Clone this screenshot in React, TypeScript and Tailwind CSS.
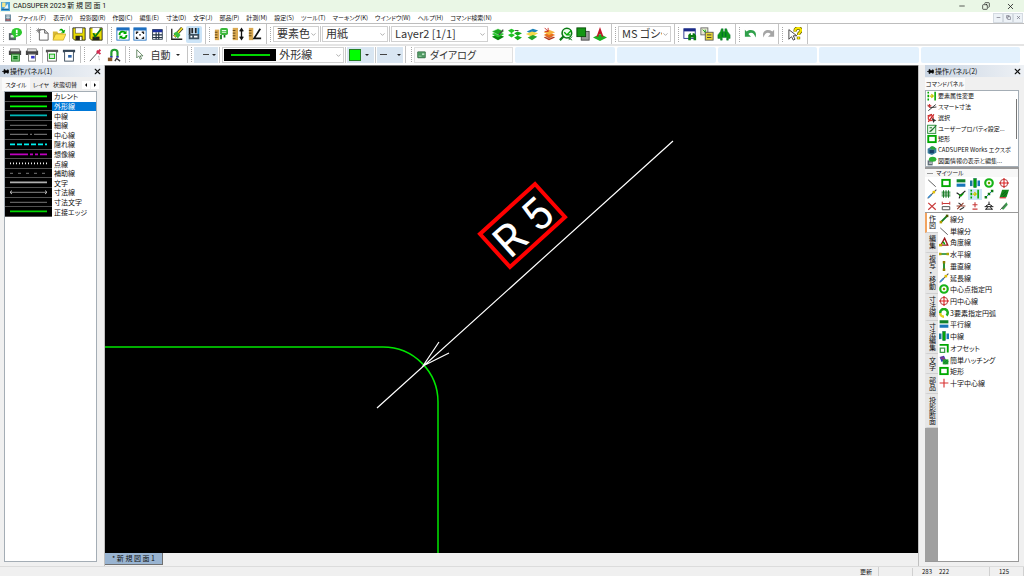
import { useState } from "react";
import type { ReactNode } from "react";
import { ChevronDown, Minus, Copy, X, Pin } from "lucide-react";

const G = "#00a800";
const DG = "#0a7a14";

// All glyphs are drawn on a 16x16 grid
const icons: Record<string, ReactNode> = {
  app: (
    <>
      <rect x="0" y="0" width="16" height="16" fill="#4aa3d8" />
      <rect x="2" y="1" width="6" height="8" fill="#f4e58a" />
      <path d="M5 12L12 3l1 9z" fill="#e8f4fb" />
      <path d="M1 13h13" stroke="#17608f" strokeWidth="2" />
    </>
  ),
  doc: (
    <>
      <rect x="2" y="1" width="12" height="14" fill="#6d8ea0" />
      <path d="M4 4h8M4 7h8M8 3v10" stroke="#fff" strokeWidth="1" />
      <path d="M3 12h10" stroke="#b33" strokeWidth="2" />
    </>
  ),
  notice: (
    <>
      <rect x="1" y="7" width="8" height="8" fill="#555f66" />
      <rect x="3" y="9" width="4" height="3" fill="#e8e8e8" />
      <ellipse cx="10" cy="6" rx="6" ry="5" fill="#2cc82c" />
      <path d="M7 9l-1 5 5-4z" fill="#2cc82c" />
      <path d="M10 3v4M10 8v1.500" stroke="#fff" strokeWidth="2" />
    </>
  ),
  newFile: (
    <>
      <path d="M5 3h6l4 4v8H5z" fill="#fff" stroke="#555" />
      <path d="M11 3v4h4" fill="#ddd" stroke="#555" />
      <path d="M1 4h6M4 1v6M2 2l4 4M6 2L2 6" stroke="#777" strokeWidth=".8" />
    </>
  ),
  open: (
    <>
      <path d="M1 5h5l1 2h6v7H1z" fill="#d9b936" />
      <path d="M4 8h12l-3 7H1z" fill="#ffe14a" stroke="#a98a12" strokeWidth=".6" />
      <path d="M8 4c2-3 4-2 5 0l2-1-1 4-4-1 2-1c-1-1-2-1-4-1z" fill={G} />
    </>
  ),
  save: (
    <>
      <path d="M1 1h14v14H3l-2-2z" fill="#e8dc00" stroke="#222" />
      <rect x="4" y="1" width="8" height="6" fill="#fff" stroke="#444" strokeWidth=".6" />
      <rect x="4" y="10" width="8" height="5" fill="#222" />
      <rect x="9" y="11" width="2" height="4" fill="#fff" />
    </>
  ),
  saveAs: (
    <>
      <path d="M1 1h14v14H3l-2-2z" fill="#e8dc00" stroke="#222" />
      <rect x="4" y="1" width="8" height="6" fill="#fff" />
      <rect x="4" y="11" width="8" height="4" fill="#222" />
      <path d="M5 7l2 4 7-9" fill="none" stroke={DG} strokeWidth="2" />
    </>
  ),
  refresh: (
    <>
      <rect x="1" y="1" width="14" height="14" fill="#fff" stroke="#1d6fc0" />
      <rect x="1" y="1" width="14" height="3" fill="#1d6fc0" />
      <path d="M4 9c0-4 5-5 7-2M12 9c0 4-5 5-7 2" fill="none" stroke={G} strokeWidth="2" />
      <path d="M12 4v4H8zM4 14v-4h4z" fill={G} />
    </>
  ),
  fit: (
    <>
      <rect x="1" y="1" width="14" height="14" fill="#fff" stroke="#1d6fc0" />
      <rect x="1" y="1" width="14" height="3" fill="#1d6fc0" />
      <path d="M4 8V6h2M12 8V6h-2M4 11v2h2M12 11v2h-2M7 9h2" fill="none" stroke="#222" strokeWidth="1.500" />
    </>
  ),
  calc: (
    <>
      <rect x="3" y="3" width="11" height="11" fill="#fff" stroke="#234" />
      <rect x="3" y="3" width="11" height="3" fill="#1a2fa0" />
      <path d="M3 9h11M3 12h11M7 6v8M10 6v8" stroke="#234" strokeWidth="1.300" />
    </>
  ),
  brush: (
    <>
      <path d="M2 2v12h12" fill="none" stroke="#222" strokeWidth="1.500" />
      <path d="M5 11L14 1" stroke="#222" strokeWidth="3.500" />
      <path d="M5 11L14 1" stroke="#f2de28" strokeWidth="2.200" />
      <path d="M4 7l5 6 3-4-4-4z" fill="#3bbf3b" />
    </>
  ),
  snap: (
    <>
      <path d="M3 1v8M6 1v6M10 1v6" stroke="#222" strokeWidth="2" />
      <path d="M13 1v7" stroke="#2c8fd0" strokeWidth="2" />
      <rect x="2" y="8" width="12" height="6" fill="#3c5060" />
      <path d="M4 11h2M8 11h4" stroke="#fff" strokeWidth="2" />
    </>
  ),
  rulerNote: (
    <>
      <rect x="1" y="3" width="5" height="12" fill="#d9a850" />
      <path d="M1 6h3M1 9h3M1 12h3" stroke="#553a10" />
      <rect x="7" y="1" width="9" height="8" rx="2" fill="#3ab83a" />
      <path d="M9 4h5M9 6h5" stroke="#fff" />
      <path d="M8 9v5M12 9v3" stroke={DG} strokeWidth="2" />
    </>
  ),
  rulerV: (
    <>
      <rect x="2" y="1" width="6" height="14" fill="#d9a850" />
      <path d="M2 4h3M2 7h3M2 10h3M2 13h3" stroke="#553a10" />
      <path d="M12 3v10M10 5l2-3 2 3M10 11l2 3 2-3" fill="none" stroke="#111" strokeWidth="1.500" />
    </>
  ),
  rulerAngle: (
    <>
      <rect x="1" y="1" width="5" height="14" fill="#d9a850" />
      <path d="M1 4h3M1 7h3M1 10h3" stroke="#553a10" />
      <path d="M14 2L7 13h8" fill="none" stroke="#111" strokeWidth="2" />
    </>
  ),
  layer: (
    <>
      <path d="M1 11l7-3 7 3-7 4z" fill="#07880c" />
      <path d="M1 8l7-3 7 3-7 4z" fill="#27c42c" />
      <path d="M1 5l7-3 7 3-7 4z" fill="#1aa81f" stroke="#d6ffd6" strokeWidth=".5" />
      <path d="M9 9l5-6" stroke="#444" strokeWidth="1.500" />
    </>
  ),
  layerMove: (
    <>
      <path d="M0 4l4-2 4 2-4 3zM0 9l4-2 4 2-4 3z" fill="#22c326" />
      <path d="M7 7l4-2 5 2-5 3zM7 12l4-2 5 2-5 3z" fill="#13ac19" />
      <path d="M8 4h4" fill="none" stroke="#333" />
    </>
  ),
  layerSwap: (
    <>
      <path d="M2 5l7-3 6 2-7 4z" fill="#1d83b9" />
      <path d="M1 8l7-3 7 2-7 4z" fill="#f2d84a" />
      <path d="M3 12l6-3 5 2-6 4z" fill="#25a52a" />
    </>
  ),
  layerStack: (
    <>
      <path d="M2 12l6-3 7 3-7 3z" fill="#b0341c" />
      <path d="M2 9l6-3 7 3-7 3z" fill="#e86f1d" />
      <path d="M2 6l6-3 7 3-7 3z" fill="#f6b33f" />
      <path d="M3 1l4 4M3 5h4V1" stroke="#c8251c" fill="none" />
      <path d="M2 10l6 3 7-3" stroke="#ffe0b0" fill="none" strokeWidth=".7" />
    </>
  ),
  search: (
    <>
      <circle cx="9" cy="7" r="5.500" fill="#e9fbe9" stroke={DG} strokeWidth="1.800" />
      <path d="M5 11l-4 4" stroke={DG} strokeWidth="2.500" />
      <path d="M6 6l3 3 5-5M9 9h4" fill="none" stroke={G} strokeWidth="1.600" />
      <path d="M10 12l5 3M15 11l-4 4" stroke={DG} />
    </>
  ),
  squares: (
    <>
      <rect x="6" y="5" width="9" height="10" fill="#9a9a9a" stroke="#444" />
      <rect x="1" y="1" width="10" height="10" fill="#149614" stroke="#084808" />
    </>
  ),
  letterA: (
    <>
      <path d="M0 12l8-4 8 4-8 4z" fill="#1cb022" />
      <path d="M8 0l4 11h-2l-1-3H7l-1 3H4z" fill="#c01828" />
    </>
  ),
  findWin: (
    <>
      <rect x="1" y="2" width="13" height="11" fill="#fff" stroke="#1b2a88" />
      <rect x="1" y="2" width="13" height="3" fill="#1b2a88" />
      <path d="M6 15V9l2-2h1v2h2V7h2l2 3v5h-3v-3h-3v3z" fill={DG} />
    </>
  ),
  findDoc: (
    <>
      <rect x="1" y="1" width="8" height="8" fill="#e6e6d0" stroke="#666" />
      <path d="M3 3l3 3M6 3v4" stroke={G} />
      <rect x="6" y="6" width="9" height="9" fill="#e9d537" stroke="#555" />
      <path d="M8 9h5M8 12h5" stroke="#333" />
    </>
  ),
  binocular: (
    <>
      <path d="M1 9l3-4 1-3h2v3h2V2h2l1 3 3 4v4h-2v2h-2v-3H6v3H4v-2H1z" fill="#119a1a" stroke="#063" strokeWidth=".5" />
      <path d="M6 6v5M10 6v5" stroke="#063" strokeWidth="1.200" />
    </>
  ),
  undo: <path d="M1 3v8h7L5 8c3-3 7-1 8 4 3-7-4-11-10-7z" fill="#2fa04a" />,
  redo: <path d="M15 3v8H8l3-3C8 5 4 7 3 12 0 5 7 1 13 5z" fill="#a5a5a5" />,
  help: (
    <>
      <path d="M1 3v11l3-3 2 4 2-1-2-4h4z" fill="#fff" stroke="#333" />
      <path d="M8 5c0-5 7-5 7-1 0 2-3 2-3 5M12 11v3" fill="none" stroke="#555000" strokeWidth="3.800" />
      <path d="M8 5c0-5 7-5 7-1 0 2-3 2-3 5M12 11v3" fill="none" stroke="#f4e400" strokeWidth="2.400" />
    </>
  ),
  printG: (
    <>
      <path d="M1 3h14v5H1z" fill="#444" />
      <rect x="3" y="1" width="10" height="3" fill="#ddd" stroke="#555" strokeWidth=".6" />
      <rect x="4" y="7" width="9" height="8" fill="#8fd08f" stroke="#267a26" />
      <path d="M6 10h5M6 12h5" stroke={DG} strokeWidth="1.500" />
    </>
  ),
  printB: (
    <>
      <path d="M1 3h14v5H1z" fill="#444" />
      <rect x="3" y="1" width="10" height="3" fill="#ddd" stroke="#555" strokeWidth=".6" />
      <rect x="4" y="7" width="8" height="8" fill="#fff" stroke="#777" />
      <rect x="7" y="9" width="4" height="3" fill="#3333c8" />
    </>
  ),
  plotG: (
    <>
      <path d="M1 2h14v3H1z" fill="#555" />
      <rect x="3" y="4" width="10" height="11" fill="#fff" stroke="#555" />
      <rect x="5" y="7" width="6" height="5" fill="#cfeccf" stroke={G} />
    </>
  ),
  plotB: (
    <>
      <path d="M1 2h14v3H1z" fill="#345" />
      <rect x="3" y="4" width="10" height="11" fill="#fff" stroke="#345" />
      <rect x="7" y="8" width="4" height="3" fill="#2a62a8" />
    </>
  ),
  pick: (
    <>
      <path d="M1 15L10 5" stroke="#444" />
      <path d="M9 6l4-4M9 3l4 4" stroke="#d22a50" strokeWidth="2.200" />
      <path d="M11 9l1 6" stroke="#999" strokeDasharray="2 1" />
    </>
  ),
  magnet: (
    <>
      <path d="M5 10V5c0-4 7-4 7 0v5" fill="none" stroke="#229c30" strokeWidth="2.500" />
      <path d="M5 9v2M12 9v2" stroke="#2233aa" strokeWidth="2.500" />
      <rect x="1" y="11" width="5" height="4" fill="#8a5a2b" />
      <path d="M9 15l2-3 4 3" stroke="#333" fill="none" strokeWidth="1.500" />
    </>
  ),
  cursor: <path d="M4 1v12l3-3 2 5 2-1-2-4h4z" fill="#fff" stroke="#2b5c2b" />,
  dialog: (
    <>
      <rect x="1" y="3" width="14" height="11" rx="1" fill="#4f9a63" stroke="#2c5e3a" />
      <path d="M3 11h5" stroke="#d8f0d8" />
      <path d="M9 6h4v3H9z" fill="#bfe6c8" />
    </>
  ),
  attr: (
    <>
      <path d="M2 1v3M2 6v4M2 12v3M13 1v14" stroke={G} strokeWidth="2.500" />
      <path d="M4 8h5M7 5l3 3-3 3" fill="none" stroke="#c8c800" strokeWidth="2" />
    </>
  ),
  smart: (
    <>
      <path d="M2 14L14 4M1 5l5 4 9-1" fill="none" stroke="#333" strokeWidth="1.500" />
      <path d="M4 3v6M1 6h6" stroke="#c33" strokeWidth="2" />
    </>
  ),
  select: (
    <>
      <path d="M2 14L11 2M1 5l7-3" stroke="#c02020" strokeWidth="2" />
      <circle cx="6" cy="8" r="4" fill="none" stroke="#d83a3a" strokeWidth="2" />
      <path d="M8 8l7 4-3 1-2 3z" fill="#333" />
    </>
  ),
  prop: (
    <>
      <rect x="1" y="2" width="13" height="13" fill="#e9f7e9" stroke="#2c8f3a" strokeWidth="1.500" />
      <path d="M4 12l3-1 8-9M4 6h4" stroke="#1b7d29" strokeWidth="1.800" />
    </>
  ),
  rect: <rect x="2" y="3" width="12" height="10" fill="#fff" stroke={G} strokeWidth="3" />,
  works: (
    <>
      <path d="M1 6l7-4 7 3v7l-7 4-7-3z" fill="#3d7f9f" />
      <path d="M5 3c5-3 9 1 9 4H6z" fill="#27a33a" />
      <rect x="4" y="8" width="7" height="5" fill="#173f66" />
    </>
  ),
  info: (
    <>
      <rect x="1" y="7" width="8" height="8" fill="#5b6b74" />
      <ellipse cx="9" cy="5" rx="6" ry="4" fill="#2cb234" />
      <path d="M3 10h5M3 12h5" stroke="#eee" />
    </>
  ),
  lineThin: <path d="M2 3l12 11" stroke="#555" strokeWidth="1.500" />,
  parallel: (
    <>
      <rect x="1" y="2" width="14" height="5" fill="#11832a" />
      <rect x="1" y="9" width="14" height="5" fill="#1876b8" />
    </>
  ),
  center: (
    <>
      <rect x="0" y="4" width="4" height="9" fill="#18769a" />
      <rect x="6" y="1" width="4" height="14" fill={G} stroke="#064" />
      <rect x="12" y="4" width="4" height="9" fill="#1876b8" />
    </>
  ),
  circle: (
    <>
      <circle cx="8" cy="8" r="6" fill="#fff" stroke="#18b418" strokeWidth="3.500" />
      <circle cx="8" cy="8" r="2" fill="#7a9b00" />
    </>
  ),
  cross: (
    <>
      <circle cx="8" cy="8" r="6" fill="none" stroke="#a33" strokeWidth="1.500" />
      <path d="M8 0v16M0 8h16" stroke="#d22" strokeWidth="1.800" />
    </>
  ),
  extend: (
    <>
      <path d="M1 15L15 1" stroke="#555" strokeWidth="1.800" />
      <path d="M2 14l5-5" stroke="#3a8cd0" strokeWidth="2.500" />
      <rect x="9" y="3" width="4" height="4" fill="#e5c200" />
    </>
  ),
  segment: (
    <>
      <path d="M3 13L13 3" stroke="#147a1f" strokeWidth="3" />
      <rect x="1" y="11" width="4" height="4" fill="#b09b00" />
      <rect x="11" y="1" width="4" height="4" fill="#4a5a00" />
    </>
  ),
  grid: <path d="M4 2v12M8 2v12M12 2v12M1 5h14M1 8h14M1 11h14" stroke="#1c7d28" strokeWidth="1.600" />,
  branch: (
    <>
      <path d="M1 6l6 4 8-7M7 10l-2 5" fill="none" stroke="#222" strokeWidth="2" />
      <path d="M5 9l3 2 4-4" stroke={G} fill="none" strokeWidth="2" />
    </>
  ),
  dots: (
    <>
      <path d="M2 14L14 2" stroke="#1876b8" strokeWidth="1.500" />
      <path d="M1 11h4v4H1zM6 6h4v4H6zM11 1h4v4h-4z" fill={DG} />
    </>
  ),
  hatchBox: (
    <>
      <path d="M5 1h11l-4 12H1z" fill="#15861f" />
      <path d="M4 10l7-6M6 13l7-7" stroke="#0a5c10" strokeWidth="1.300" />
      <path d="M1 14h10" stroke="#c83030" strokeWidth="2" />
    </>
  ),
  del: <path d="M2 3l12 11M14 3L2 14" stroke="#c83a3a" strokeWidth="2" />,
  dim: (
    <>
      <path d="M2 1v5M14 1v5M2 4h12" stroke="#c83a3a" strokeWidth="1.600" />
      <path d="M2 9h12v5H2z" fill="none" stroke="#555" strokeWidth="1.600" />
    </>
  ),
  trim: (
    <>
      <path d="M2 13L12 3M1 8h14" stroke="#8e3a2a" strokeWidth="1.800" />
      <path d="M6 14l7-4M4 3l4 3" stroke="#333" strokeWidth="1.800" />
    </>
  ),
  plusMinus: <path d="M8 2v8M4 6h8M4 13h8" stroke="#c83a3a" strokeWidth="1.800" />,
  house: <path d="M8 1v4M3 8l5-3 5 3M1 9h14M3 14l3-5M13 14l-3-5M2 13h12" fill="none" stroke="#222" strokeWidth="1.600" />,
  pen: (
    <>
      <path d="M3 12L12 2l2 4-7 8z" fill="#3b9a4c" />
      <path d="M2 14l8-8" stroke="#555" strokeWidth="1.500" />
    </>
  ),
  angle: (
    <>
      <path d="M14 13H3L9 2z" fill="none" stroke="#9d1c1c" strokeWidth="2.200" />
      <rect x="0" y="11" width="5" height="4" fill="#c2a900" />
      <path d="M9 12a5 5 0 00-3-4" stroke={G} strokeWidth="2.500" fill="none" />
    </>
  ),
  horiz: (
    <>
      <path d="M2 8h12" stroke="#1c8a28" strokeWidth="2.500" />
      <path d="M0 6h4v4H0zM12 6h4v4h-4z" fill="#b3a400" />
    </>
  ),
  vert: (
    <>
      <path d="M8 2v12" stroke="#1c8a28" strokeWidth="3" />
      <path d="M6 0h4v4H6zM6 12h4v4H6z" fill="#8a8000" />
    </>
  ),
  arc3: (
    <>
      <path d="M8 14A6 6 0 012 8" fill="none" stroke="#e0d020" strokeWidth="4" />
      <path d="M2 8a6 6 0 1110 4" fill="none" stroke="#1cae1c" strokeWidth="4" />
    </>
  ),
  offset: (
    <>
      <path d="M1 3h13v12" fill="none" stroke={G} strokeWidth="3" />
      <path d="M2 8h7v7H2z" fill="none" stroke="#3a9a48" strokeWidth="2" />
    </>
  ),
  hatch: (
    <>
      <path d="M1 3l7-2 3 7-7 3z" fill="#2a3fc0" />
      <path d="M2 4l8 5M5 2l5 6" stroke="#d03060" strokeWidth="1.500" />
      <path d="M6 7h9v8H6z" fill="#21a02c" />
      <path d="M8 13l5-5M10 15l5-5" stroke="#063" />
    </>
  ),
  plus: <path d="M8 1v14M1 8h14" stroke="#d83030" strokeWidth="1.800" />,
};

const Icon = ({ name, className = "size-[14px]" }: { name: string; className?: string }) => (
  <svg viewBox="0 0 16 16" className={`${className} shrink-0`} aria-hidden="true">
    {icons[name]}
  </svg>
);

const Tool = ({ name, active }: { name: string; active?: boolean }) => (
  <button
    aria-label={name}
    className={`flex h-[17px] w-4 shrink-0 items-center justify-center rounded-xs ${active ? "bg-[#cce4f7]" : ""}`}
  >
    <Icon name={name} />
  </button>
);

const Tools = ({ names, active }: { names: string[]; active?: string }) => (
  <div className="flex flex-1 items-center justify-around">
    {names.map((n) => (
      <Tool key={n} name={n} active={n === active} />
    ))}
  </div>
);

const Sep = () => <div className="h-4 w-px shrink-0 bg-[#c8c8c8]" />;

const Group = ({ className, children }: { className: string; children: ReactNode }) => (
  <div className={`flex h-full shrink-0 items-center gap-px border-r border-[#c4c4c4] pr-[2px] ${className}`}>
    <div className="ml-[3px] mr-px h-[15px] shrink-0 border-l border-dotted border-[#a8a8a8]" />
    {children}
  </div>
);

interface ComboProps {
  label: string;
  value: string;
  className: string;
  children?: ReactNode;
}

const Combo = ({ label, value, className, children }: ComboProps) => (
  <div className={`relative flex h-4 shrink-0 items-center border border-[#d0d0d0] bg-white ${className}`}>
    {children}
    <select aria-label={label} className="h-full w-full min-w-0 appearance-none bg-transparent pb-px pl-[3px] pr-2 text-[11px] leading-[13px] text-[#333]">
      <option>{value}</option>
    </select>
    <ChevronDown className="pointer-events-none absolute right-px top-1 size-[7px] text-[#777]" />
  </div>
);

const Caret = () => <span className="border-x-2 border-t-2 border-x-transparent border-t-[#222]" />;

const menus = [
  "ファイル(F)", "表示(V)", "投影図(R)", "作図(C)", "編集(E)", "寸法(D)", "文字(J)", "部品(P)",
  "計測(M)", "設定(S)", "ツール(T)", "マーキング(K)", "ウインドウ(W)", "ヘルプ(H)", "コマンド検索(N)",
];

const styles = [
  { name: "カレント", color: "#00ff00", width: 2 },
  { name: "外形線", color: "#00ff00", width: 2 },
  { name: "中線", color: "#00b8b8", width: 2 },
  { name: "細線", color: "#808080", width: 1 },
  { name: "中心線", color: "#909090", width: 1, dash: "18 2 2 2" },
  { name: "隠れ線", color: "#00f0f0", width: 2, dash: "5 2" },
  { name: "想像線", color: "#c000c0", width: 2, dash: "18 2 3 2 3 2" },
  { name: "点線", color: "#f0f0f0", width: 2, dash: "1 2" },
  { name: "補助線", color: "#808080", width: 1, dash: "3 5" },
  { name: "文字", color: "#b0b0b0", width: 2 },
  { name: "寸法線", color: "#909090", width: 1, arrow: true },
  { name: "寸法文字", color: "#808080", width: 1 },
  { name: "正接エッジ", color: "#00d800", width: 2 },
];

const commands = [
  ["attr", "要素属性変更"],
  ["smart", "スマート寸法"],
  ["select", "選択"],
  ["prop", "ユーザープロパティ設定..."],
  ["rect", "矩形"],
  ["works", "CADSUPER Works エクスポ"],
  ["info", "図面情報の表示と編集..."],
];

const myTools = [
  "lineThin", "rect", "parallel", "center", "circle", "cross",
  "extend", "grid", "branch", "attr", "dots", "hatchBox",
  "del", "dim", "trim", "plusMinus", "house", "pen",
];

const sideTabs = ["作図", "編集", "複写・移動", "寸法線", "寸法編集", "文字", "部品", "投影断面"];

const drawTools = [
  ["segment", "線分"],
  ["lineThin", "単線分"],
  ["angle", "角度線"],
  ["horiz", "水平線"],
  ["vert", "垂直線"],
  ["extend", "延長線"],
  ["circle", "中心点指定円"],
  ["cross", "円中心線"],
  ["arc3", "3要素指定円弧"],
  ["parallel", "平行線"],
  ["center", "中線"],
  ["offset", "オフセット"],
  ["hatch", "簡単ハッチング"],
  ["rect", "矩形"],
  ["plus", "十字中心線"],
];

const TitleBar = () => (
  <>
    <header className="flex h-3 shrink-0 items-center bg-[#eaf7e6] pl-px pr-[9px]">
      <Icon name="app" className="size-[9px]" />
      <h1 className="ml-[3px] flex-1 whitespace-nowrap font-[Roboto,'Noto_Sans_CJK_JP',sans-serif] leading-[12px]">CADSUPER 2025 新 規 図 面 1</h1>
      <div className="flex gap-4">
        <button aria-label="最小化"><Minus className="size-2" /></button>
        <button aria-label="元に戻す"><Copy className="size-2 -scale-x-100" /></button>
        <button aria-label="閉じる"><X className="size-[9px]" /></button>
      </div>
    </header>
    <nav className="flex h-3 shrink-0 items-center border-b border-[#bdbdbd] bg-white pl-1 pr-px">
      <Icon name="doc" className="size-2" />
      <div className="ml-[6px] flex flex-1 gap-[7px] text-[6px]">
        {menus.map((m) => (
          <button key={m} className="whitespace-nowrap leading-[11px]">{m}</button>
        ))}
      </div>
      {[Minus, Copy, X].map((Glyph, i) => (
        <button key={i} aria-label={`図面ウィンドウ${i + 1}`} className="flex h-[10px] w-[10px] items-center justify-center border border-[#d5dbe2] bg-[#edf2f7] text-[#667]">
          <Glyph className="size-[5px]" strokeWidth={3} />
        </button>
      ))}
    </nav>
  </>
);

const Toolbars = () => (
  <>
    <div className="flex h-5 shrink-0 items-center overflow-hidden bg-white">
      <Group className="w-[27px]"><Tools names={["notice"]} /></Group>
      <Group className="w-[81px]">
        <Tools names={["newFile", "open"]} />
        <Sep />
        <Tools names={["save", "saveAs"]} />
      </Group>
      <Group className="w-[98px]">
        <div className="flex w-[51px] shrink-0"><Tools names={["refresh", "fit", "calc"]} /></div>
        <Sep />
        <Tools names={["brush", "snap"]} active="snap" />
      </Group>
      <Group className="w-[61px]"><Tools names={["rulerNote", "rulerV", "rulerAngle"]} /></Group>
      <Group className="w-[345px]">
        <Combo label="要素色" value="要素色" className="w-[46px]" />
        <Sep />
        <Combo label="用紙" value="用紙" className="w-[66px]" />
        <Sep />
        <Combo label="レイヤ" value="Layer2 [1/1]" className="w-[97px]" />
        <Tools names={["layer", "layerMove", "layerSwap", "layerStack", "search", "squares", "letterA"]} />
      </Group>
      <Group className="w-[63px]"><Combo label="フォント" value="MS ゴシック" className="w-[53px]" /></Group>
      <Group className="w-[61px]"><Tools names={["findWin", "findDoc", "binocular"]} /></Group>
      <Group className="w-[43px]"><Tools names={["undo", "redo"]} /></Group>
      <Group className="w-[29px]"><Tools names={["help"]} /></Group>
    </div>
    <div className="flex h-[21px] shrink-0 items-center overflow-hidden border-t-2 border-[#e4e4e4] bg-white pb-[2px] pr-1 text-[10px] text-[#333]">
      <Group className="w-[81px]">
        <Tools names={["printG", "printB"]} />
        <Sep />
        <Tools names={["plotG", "plotB"]} />
      </Group>
      <Group className="w-[45px]"><Tools names={["pick", "magnet"]} /></Group>
      <Group className="w-[62px]">
        <button className="flex flex-1 items-center justify-between pl-[2px] pr-[5px]">
          <Icon name="cursor" className="size-[11px]" />
          <span>自動</span>
          <Caret />
        </button>
      </Group>
      <Group className="w-[218px]">
        <button aria-label="線種" className="flex h-4 w-[25px] items-center justify-end gap-[3px] bg-[#d9e6f2] pr-[2px]">
          <span className="h-px w-[6px] bg-[#444]" />
          <Caret />
        </button>
        <Sep />
        <Combo label="線スタイル" value="外形線" className="ml-px w-[122px]">
          <svg viewBox="0 0 52 12" className="ml-px h-3 w-[52px] shrink-0 bg-black">
            <path d="M7 6h39" stroke="#00d800" strokeWidth="2" />
          </svg>
        </Combo>
        <Sep />
        <button aria-label="色" className="flex h-4 w-[27px] items-center gap-1 bg-[#d9e6f2] pl-[2px]">
          <span className="size-3 border border-[#238023] bg-[#00ff00]" />
          <Caret />
        </button>
        <Sep />
        <button aria-label="線幅" className="flex h-4 w-[27px] items-center gap-[10px] bg-[#d9e6f2] pl-[3px]">
          <span className="h-px w-[7px] bg-[#444]" />
          <Caret />
        </button>
      </Group>
      <div className="ml-[5px] mr-[2px] h-[15px] border-l border-dotted border-[#a8a8a8]" />
      <div className="grid flex-1 grid-cols-6 gap-[2px]">
        <button className="flex h-4 items-center gap-1 border border-[#e0e0e0] bg-[#fbfbfb] pl-[2px]">
          <Icon name="dialog" className="size-[9px]" />
          ダイアログ
        </button>
        {[1, 2, 3, 4, 5].map((n) => (
          <div key={n} className="h-4 rounded-xs bg-[#e3f1fd]" />
        ))}
      </div>
    </div>
  </>
);

const PanelHeader = ({ title }: { title: string }) => (
  <div className="flex h-3 shrink-0 items-center bg-linear-to-r from-[#c9d5e3] to-[#eef1f5] px-[2px]">
    <Pin className="size-[7px] rotate-90 fill-black" strokeWidth={3} />
    <h2 className="ml-px flex-1 whitespace-nowrap">{title}</h2>
    <button aria-label={`${title}を閉じる`}><X className="size-[9px]" strokeWidth={3} /></button>
  </div>
);

const LeftPanel = ({ current, onSelect }: { current: string; onSelect: (s: string) => void }) => (
  <aside className="flex w-[105px] shrink-0 flex-col border-r border-[#c0c0c0] bg-[#f0f0f0] pb-1">
    <PanelHeader title="操作パネル(1)" />
    <div className="mt-px flex h-[13px] shrink-0 items-center pl-[2px] pr-[5px] text-[6px]">
      <button className="h-full w-7 whitespace-nowrap bg-[#fafafa]">スタイル</button>
      <button className="w-[22px] whitespace-nowrap">レイヤ</button>
      <button className="flex-1 whitespace-nowrap pl-px text-left">状態切替</button>
      <button aria-label="前へ" className="flex size-2 shrink-0 items-center justify-center bg-white"><span className="border-y-2 border-r-2 border-y-transparent border-r-black" /></button>
      <button aria-label="次へ" className="ml-px flex size-2 shrink-0 items-center justify-center bg-white"><span className="border-y-2 border-l-2 border-y-transparent border-l-black" /></button>
    </div>
    <div className="ml-1 mr-[7px] flex-1 border border-[#a4adb5] bg-white">
      <ul className="flex h-[125px] flex-col">
        {styles.map((s) => (
          <li key={s.name} className="flex min-h-0 flex-1">
            <button
              onClick={() => onSelect(s.name)}
              className={`flex w-full items-center text-left ${s.name === current ? "bg-[#0078d7] text-white" : ""}`}
            >
              <svg viewBox="0 0 47 10" preserveAspectRatio="none" className="h-full w-[47px] shrink-0 border-b border-[#505050] bg-black">
                <path d="M5 5h37" stroke={s.color} strokeWidth={s.width} strokeDasharray={s.dash} />
                {s.arrow && <path d="M7 3L5 5l2 2M40 3l2 2-2 2" fill="none" stroke="#ccc" />}
              </svg>
              <span className="ml-[2px] whitespace-nowrap leading-[9px]">{s.name}</span>
            </button>
          </li>
        ))}
      </ul>
    </div>
  </aside>
);

const Drawing = () => (
  <main className="flex min-w-0 flex-1 flex-col bg-[#f0f0f0]">
    <div className="min-h-0 flex-1 overflow-hidden border-t border-[#707070] bg-black">
      <svg viewBox="105 66 813 487" preserveAspectRatio="xMinYMin slice" className="h-full w-full">
        <path d="M105 347H383A55 55 0 01438 402V560" fill="none" stroke="#00e600" strokeWidth="1.500" />
        <path d="M673 141L377 408M439 342L423 366L449 353" fill="none" stroke="#fff" strokeWidth="1.200" />
        <path d="M535 184L565 217L510 267L480 234Z" fill="none" stroke="#f00" strokeWidth="4" />
        <g
          transform="translate(513 257) rotate(-42)"
          fill="#fff"
          fontSize="44"
          fontFamily="Roboto, sans-serif"
        >
          <text x="-4" y="0">R</text>
          <text x="34" y="0">5</text>
        </g>
      </svg>
    </div>
    <div className="flex h-[13px] shrink-0">
      <button className="h-3 w-[58px] border-b border-r border-[#707070] bg-[#99b4d1] leading-[11px]">* 新 規 図 面 1</button>
    </div>
  </main>
);

const RightPanel = ({ tab, onTab }: { tab: string; onTab: (t: string) => void }) => (
  <aside className="flex w-[106px] shrink-0 flex-col border-l border-[#c0c0c0] bg-[#f0f0f0] pb-1 pl-[6px]">
    <PanelHeader title="操作パネル(2)" />
    <div className="mt-px flex h-3 shrink-0 text-[6px]">
      <button className="w-10 whitespace-nowrap bg-[#fafafa]">コマンドパネル</button>
    </div>
    <div className="mr-[5px] flex h-[77px] shrink-0 border border-[#a4adb5] bg-white text-[6px]">
      <ul className="flex min-w-0 flex-1 flex-col">
        {commands.map(([icon, label]) => (
          <li key={label} className="flex min-h-0 flex-1">
            <button className="flex items-center gap-px whitespace-nowrap pl-px leading-[10px]">
              <Icon name={icon} className="size-[10px]" />
              {label}
            </button>
          </li>
        ))}
      </ul>
      <div className="mr-px mt-2 h-10 w-px shrink-0 bg-[#777]" />
    </div>
    <div className="mr-[5px] flex min-h-0 flex-1 flex-col border-b border-r border-t-2 border-[#999] bg-white">
      <div className="flex h-2 shrink-0 items-center bg-[#f7f7f7] pl-[2px] text-[6px]">
        <span className="h-px w-[6px] bg-[#999]" />
        <h3 className="ml-[3px] leading-[8px]">マイツール</h3>
      </div>
      <div className="grid h-[36px] shrink-0 grid-cols-6 border-b border-[#999] pr-[7px]">
        {myTools.map((n) => (
          <button key={n} aria-label={n} className={`flex items-center justify-center ${n === "attr" ? "bg-[#cce4f7]" : ""}`}>
            <Icon name={n} className="size-[10px]" />
          </button>
        ))}
      </div>
      <div className="flex min-h-0 flex-1">
        <div className="w-[13px] shrink-0 bg-[#a0a0a0]">
          <div className="flex h-[215px] flex-col">
            {sideTabs.map((t) => (
              <button
                key={t}
                onClick={() => onTab(t)}
                className={`flex flex-auto items-center justify-center border-b border-l-2 border-b-[#d0d0d0] leading-[10px] [writing-mode:vertical-rl] ${
                  t === tab ? "border-l-[#f2a35e] bg-white" : "border-l-[#e6e6e6] bg-[#e6e6e6]"
                }`}
              >
                {t}
              </button>
            ))}
          </div>
        </div>
        <ul className="flex h-[176px] flex-1 flex-col">
          {drawTools.map(([icon, label]) => (
            <li key={label} className="flex min-h-0 flex-1">
              <button className="flex items-center gap-px whitespace-nowrap pl-px leading-[10px]">
                <Icon name={icon} className="size-[10px]" />
                {label}
              </button>
            </li>
          ))}
        </ul>
      </div>
    </div>
  </aside>
);

const StatusBar = () => (
  <footer className="flex h-[10px] shrink-0 items-center justify-end border-t border-[#dcdcdc] bg-[#f0f0f0] text-[6px] leading-[9px]">
    <span className="border-r border-[#d0d0d0] pr-[6px]">更新</span>
    <span className="h-2 w-[34px] border-r border-[#d0d0d0]" />
    <span className="flex w-[77px] gap-[7px] border-r border-[#d0d0d0] pl-[9px]">
      <span>283</span>
      <span>222</span>
    </span>
    <span className="w-[34px] border-r border-[#d0d0d0] pl-[9px]">125</span>
  </footer>
);

export default function App() {
  const [style, setStyle] = useState("外形線");
  const [tab, setTab] = useState("作図");

  return (
    <div className="flex h-screen flex-col overflow-hidden bg-[#f0f0f0] font-['Noto_Sans_CJK_JP',sans-serif] text-[7px] leading-[10px] text-[#111] [font-feature-settings:'palt']">
      <TitleBar />
      <Toolbars />
      <div className="flex min-h-0 flex-1">
        <LeftPanel current={style} onSelect={setStyle} />
        <Drawing />
        <RightPanel tab={tab} onTab={setTab} />
      </div>
      <StatusBar />
    </div>
  );
}
